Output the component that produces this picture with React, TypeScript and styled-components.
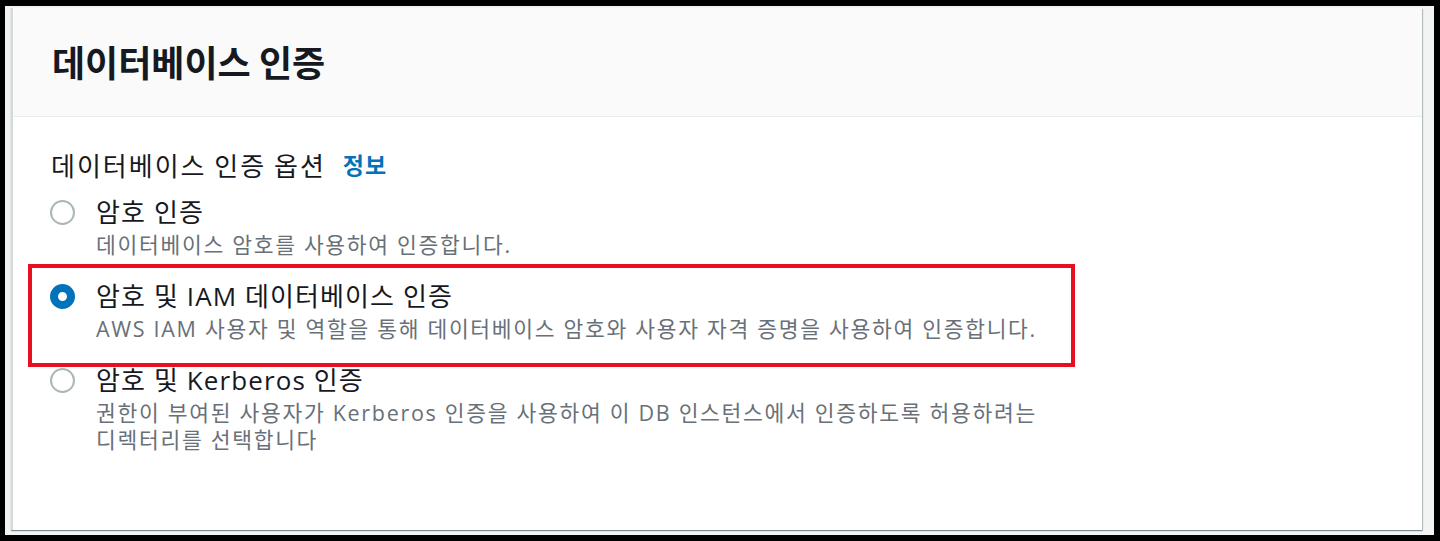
import React from "react";
import styled, { createGlobalStyle } from "styled-components";

const Global = createGlobalStyle`
  html, body { margin: 0; padding: 0; background: #000; }
  body { font-family: "Open Sans", "Noto Sans CJK KR", sans-serif; }
  #root { width: 1440px; height: 541px; }
`;

const Frame = styled.div`
  box-sizing: border-box;
  width: 1440px;
  height: 541px;
  padding: 6px 6px 6px 5px;
  background: #000;
  display: flex;
`;

const Page = styled.div`
  flex: 1;
  background: #f2f3f3;
  padding: 2px 12px 5px 6px;
  display: flex;
  flex-direction: column;
`;

const Card = styled.section`
  flex: 1;
  background: #fff;
  border-left: 2px solid #d5dbdb;
  box-shadow: 0 1px 1px 0 rgba(0, 28, 36, 0.35), 1px 1px 1px 0 rgba(0, 28, 36, 0.2);
  display: flex;
  flex-direction: column;
`;

const Header = styled.header`
  height: 108px;
  background: #fafafa;
  border-bottom: 1px solid #eaeded;
  display: flex;
  align-items: center;
  padding: 0 39px;
`;

const Title = styled.h2`
  margin: 0;
  font-family: "Noto Sans CJK KR", sans-serif;
  font-weight: 700;
  font-size: 36px;
  color: #16191f;
  line-height: 40px;
  transform: translateY(-1px);
`;

const Body = styled.div`
  padding: 31px 38px 0 37px;
  display: flex;
  flex-direction: column;
  word-break: keep-all;
`;

const FieldLabel = styled.div`
  display: flex;
  align-items: center;
  gap: 17px;
  height: 32px;
  margin-bottom: 16px;
  padding-left: 1px;
  font-family: "Noto Sans CJK KR", sans-serif;
  font-size: 26px;
  letter-spacing: 2px;
  color: #16191f;
`;

const InfoLink = styled.a`
  color: #0073bb;
  font-weight: 700;
  font-size: 23px;
  letter-spacing: 1px;
  text-decoration: none;
`;

const Options = styled.div`
  display: flex;
  flex-direction: column;
  gap: 22px;
`;

const Option = styled.div`
  position: relative;
  display: grid;
  grid-template-columns: 25px 1fr;
  column-gap: 21px;
`;

const Radio = styled.span<{ $checked?: boolean }>`
  box-sizing: border-box;
  width: 25px;
  height: 25px;
  margin-top: 4px;
  border-radius: 50%;
  background: #fff;
  border: ${(p) => (p.$checked ? "8px solid #0073bb" : "2px solid #aab7b8")};
`;

const OptionText = styled.div`
  display: flex;
  flex-direction: column;
`;

const OptionLabel = styled.div`
  font-family: "Open Sans", "Noto Sans CJK KR", sans-serif;
  font-size: 26px;
  letter-spacing: 1.1px;
  line-height: 32px;
  color: #16191f;
`;

const OptionDesc = styled.div`
  margin-top: 3px;
  font-family: "Open Sans", "Noto Sans CJK KR", sans-serif;
  font-size: 21.5px;
  letter-spacing: 1.7px;
  line-height: 27px;
  color: #687078;
  max-width: 965px;
`;

const Highlight = styled.div`
  position: absolute;
  top: -16px;
  left: -22px;
  width: 1047px;
  height: 103px;
  box-sizing: border-box;
  border: 4px solid #e8101e;
  pointer-events: none;
`;

const options = [
  {
    label: "암호 인증",
    desc: "데이터베이스 암호를 사용하여 인증합니다.",
  },
  {
    label: "암호 및 IAM 데이터베이스 인증",
    desc: "AWS IAM 사용자 및 역할을 통해 데이터베이스 암호와 사용자 자격 증명을 사용하여 인증합니다.",
    checked: true,
  },
  {
    label: "암호 및 Kerberos 인증",
    desc: "권한이 부여된 사용자가 Kerberos 인증을 사용하여 이 DB 인스턴스에서 인증하도록 허용하려는 디렉터리를 선택합니다",
  },
];

export default function App() {
  return (
    <>
      <Global />
      <Frame>
        <Page>
          <Card>
            <Header>
              <Title>데이터베이스 인증</Title>
            </Header>
            <Body>
              <FieldLabel>
                <span>데이터베이스 인증 옵션</span>
                <InfoLink href="#">정보</InfoLink>
              </FieldLabel>
              <Options>
                {options.map((o) => (
                  <Option key={o.label}>
                    <Radio $checked={o.checked} />
                    <OptionText>
                      <OptionLabel>{o.label}</OptionLabel>
                      <OptionDesc>{o.desc}</OptionDesc>
                    </OptionText>
                    {o.checked && <Highlight />}
                  </Option>
                ))}
              </Options>
            </Body>
          </Card>
        </Page>
      </Frame>
    </>
  );
}
